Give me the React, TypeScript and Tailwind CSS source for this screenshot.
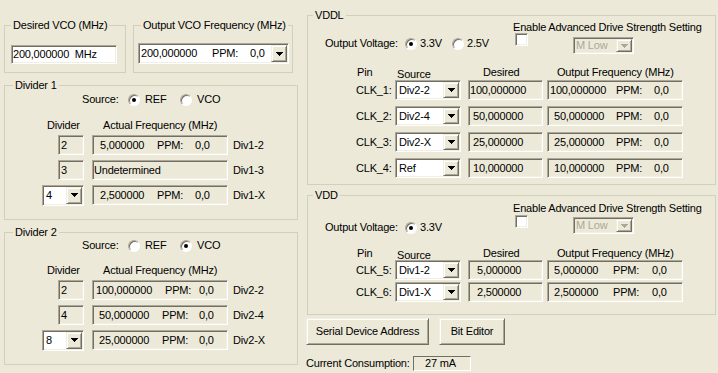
import React from 'react';
import clsx from 'clsx';

// classic win32 3d edges
const sunken =
  'border border-t-[#aca899] border-l-[#aca899] border-b-white border-r-white shadow-[inset_1px_1px_0_#716f64,inset_-1px_-1px_0_#f1efe2]';
const raised =
  'border border-t-[#f1efe2] border-l-[#f1efe2] border-b-[#716f64] border-r-[#716f64] shadow-[inset_1px_1px_0_white,inset_-1px_-1px_0_#aca899]';

const Arrow = ({ color = '#000' }: { color?: string }) => (
  <svg width="7" height="4" viewBox="0 0 7 4">
    <path d="M0 0h7v1h-1v1h-1v1h-1v1h-1v-1h-1v-1h-1v-1h-1z" fill={color} />
  </svg>
);

interface BoxProps {
  className?: string;
  children?: React.ReactNode;
}

const Group: React.FC<BoxProps & { title: string; legend: string }> = ({ title, legend, className, children }) => (
  <fieldset className={clsx('border border-[#d0d0bf] min-w-0', className)}>
    <legend className={clsx('px-[2px] h-[13px] leading-[13px] whitespace-nowrap', legend)}>{title}</legend>
    {children}
  </fieldset>
);

const ReadBox: React.FC<BoxProps> = ({ className, children }) => (
  <div className={clsx('flex items-center whitespace-pre bg-[#ece9d8]', sunken, className)}>{children}</div>
);

const Combo: React.FC<BoxProps & { disabled?: boolean; textCls?: string }> = ({
  className,
  children,
  disabled,
  textCls
}) => (
  <div className={clsx('flex items-stretch', sunken, disabled ? 'bg-[#ece9d8] text-[#aca899]' : 'bg-white', className)}>
    <div className={clsx('flex-1 flex items-center whitespace-pre overflow-hidden', textCls)}>{children}</div>
    <div className={clsx('w-[16px] my-[1px] mr-[1px] flex items-center justify-center bg-[#ece9d8]', raised)}>
      <Arrow color={disabled ? '#aca899' : '#000'} />
    </div>
  </div>
);

const Radio = ({ on }: { on?: boolean }) => (
  <div className="w-[12px] h-[12px] shrink-0 rounded-full bg-white border border-t-[#aca899] border-l-[#aca899] border-b-white border-r-white shadow-[inset_1px_1px_0_#716f64] flex items-center justify-center">
    {on && <div className="w-[4px] h-[4px] rounded-full bg-black" />}
  </div>
);

const Check = ({ className }: { className?: string }) => (
  <div className={clsx('w-[13px] h-[13px] bg-white', sunken, className)} />
);

// value / PPM / 0,0 columns inside a frequency box
const Freq = ({ v, a, b }: { v: string; a: string; b: string }) => (
  <>
    <span className={clsx('shrink-0', a)}>{v}</span>
    <span className={clsx('shrink-0', b)}>PPM:</span>
    <span>0,0</span>
  </>
);

interface DivRow {
  first: React.ReactNode;
  freq: React.ReactNode;
  label: string;
}

const Divider: React.FC<{
  title: string;
  refOn: boolean;
  rows: DivRow[];
  className?: string;
  srcMt: string;
  hdrMt: string;
}> = ({ title, refOn, rows, className, srcMt, hdrMt }) => (
  <Group title={title} legend="ml-[8px]" className={clsx('w-[294px]', className)}>
    <div className={clsx('flex items-center h-[13px]', srcMt)}>
      <span className="ml-[77px] w-[46px]">Source:</span>
      <Radio on={refOn} />
      <span className="ml-[5px] w-[35px]">REF</span>
      <Radio on={!refOn} />
      <span className="ml-[5px]">VCO</span>
    </div>
    <div className={clsx('flex h-[13px]', hdrMt)}>
      <span className="ml-[42px] w-[56px]">Divider</span>
      <span>Actual Frequency (MHz)</span>
    </div>
    {rows.map((r, i) => (
      <div key={r.label} className={clsx('flex items-center h-[20px]', i === 0 ? 'mt-[3px]' : 'mt-[5px]')}>
        <div className="w-[79px] flex justify-end">{r.first}</div>
        <ReadBox className="ml-[8px] w-[136px] h-[20px]">{r.freq}</ReadBox>
        <span className="ml-[5px]">{r.label}</span>
      </div>
    ))}
  </Group>
);

const NumBox = ({ n }: { n: string }) => <ReadBox className="w-[26px] h-[20px] pl-[2px]">{n}</ReadBox>;

const ClkRow: React.FC<{
  label: string;
  src: string;
  desired: string;
  dPl: string;
  v: string;
  a: string;
  b: string;
  className?: string;
}> = ({ label, src, desired, dPl, v, a, b, className }) => (
  <div className={clsx('flex items-center h-[20px]', className)}>
    <span className="ml-[48px] w-[39px]">{label}</span>
    <Combo className="w-[66px] h-[20px]" textCls="pl-[3px]">
      {src}
    </Combo>
    <ReadBox className={clsx('ml-[7px] w-[75px] h-[20px]', dPl)}>{desired}</ReadBox>
    <ReadBox className="ml-[4px] w-[136px] h-[20px]">
      <Freq v={v} a={a} b={b} />
    </ReadBox>
  </div>
);

const DriveSetting: React.FC<{ className?: string; checkCls: string; comboCls: string }> = ({
  className,
  checkCls,
  comboCls
}) => (
  <div className={clsx('flex flex-col', className)}>
    <span className="h-[12px] leading-[12px]">Enable Advanced Drive Strength Setting</span>
    <div className="flex items-start">
      <Check className={clsx('ml-[2px]', checkCls)} />
      <Combo disabled className={clsx('ml-[45px] w-[61px] h-[17px]', comboCls)} textCls="pl-[2px]">
        M Low
      </Combo>
    </div>
  </div>
);

const ColumnHeader = () => (
  <div className="flex items-start h-[13px]">
    <span className="ml-[49px] w-[40px]">Pin</span>
    <span className="w-[86px] mt-[2px]">Source</span>
    <span className="w-[74px]">Desired</span>
    <span>Output Frequency (MHz)</span>
  </div>
);

const Button: React.FC<BoxProps> = ({ className, children }) => (
  <div className={clsx('flex items-center justify-center bg-[#ece9d8]', raised, className)}>{children}</div>
);

export default function App() {
  return (
    <div className="w-[718px] h-[373px] bg-[#ece9d8] flex overflow-hidden whitespace-nowrap text-[11px] leading-[13px] tracking-[-0.2px] text-black font-['Liberation_Sans',Arial,sans-serif]">
      {/* left column */}
      <div className="ml-[4px] w-[294px] shrink-0 flex flex-col pt-[19px]">
        <div className="flex">
          <Group title="Desired VCO (MHz)" legend="ml-[6px]" className="w-[122px] h-[54px]">
            <div className={clsx('mt-[13px] ml-[6px] w-[106px] h-[19px] bg-white flex items-center pl-[1px] whitespace-pre', sunken)}>
              200,000000  MHz
            </div>
          </Group>
          <Group title="Output VCO Frequency (MHz)" legend="ml-[7px]" className="ml-[7px] w-[160px] h-[54px]">
            <Combo className="mt-[11px] ml-[4px] w-[151px] h-[21px]">
              <Freq v="200,000000" a="w-[73px] pl-[2px]" b="w-[38px]" />
            </Combo>
          </Group>
        </div>

        <Divider
          title="Divider 1"
          refOn
          className="mt-[6px] h-[141px]"
          srcMt="mt-[1px]"
          hdrMt="mt-[13px]"
          rows={[
            {
              first: <NumBox n="2" />,
              freq: <Freq v="5,000000" a="w-[64px] pl-[7px]" b="w-[38px]" />,
              label: 'Div1-2'
            },
            { first: <NumBox n="3" />, freq: <span className="pl-[1px]">Undetermined</span>, label: 'Div1-3' },
            {
              first: (
                <Combo className="w-[42px] h-[21px]" textCls="pl-[3px]">
                  4
                </Combo>
              ),
              freq: <Freq v="2,500000" a="w-[64px] pl-[7px]" b="w-[38px]" />,
              label: 'Div1-X'
            }
          ]}
        />

        <Divider
          title="Divider 2"
          refOn={false}
          className="mt-[6px] h-[139px]"
          srcMt="mt-0"
          hdrMt="mt-[12px]"
          rows={[
            {
              first: <NumBox n="2" />,
              freq: <Freq v="100,000000" a="w-[72px] pl-[3px]" b="w-[34px]" />,
              label: 'Div2-2'
            },
            {
              first: <NumBox n="4" />,
              freq: <Freq v="50,000000" a="w-[69px] pl-[6px]" b="w-[37px]" />,
              label: 'Div2-4'
            },
            {
              first: (
                <Combo className="w-[42px] h-[21px]" textCls="pl-[3px]">
                  8
                </Combo>
              ),
              freq: <Freq v="25,000000" a="w-[69px] pl-[6px]" b="w-[37px]" />,
              label: 'Div2-X'
            }
          ]}
        />
      </div>

      {/* right column */}
      <div className="ml-[9px] w-[409px] shrink-0 flex flex-col pt-[9px]">
        <Group title="VDDL" legend="ml-[5px]" className="w-[409px] h-[176px]">
          <div className="flex h-[44px]">
            <div className="w-[205px] pt-[15px]">
              <div className="flex items-center h-[13px] ml-[17px]">
                <span className="w-[80px]">Output Voltage:</span>
                <Radio on />
                <span className="ml-[3px] w-[32px]">3.3V</span>
                <Radio />
                <span className="ml-[3px]">2.5V</span>
              </div>
            </div>
            <DriveSetting className="-mt-[1px]" checkCls="mt-0" comboCls="mt-[4px]" />
          </div>
          <ColumnHeader />
          <ClkRow className="mt-[1px]" label="CLK_1:" src="Div2-2" desired="100,000000" dPl="pl-[1px]" v="100,000000" a="w-[68px] pl-[2px]" b="w-[38px]" />
          <ClkRow className="mt-[6px]" label="CLK_2:" src="Div2-4" desired="50,000000" dPl="pl-[4px]" v="50,000000" a="w-[68px] pl-[6px]" b="w-[38px]" />
          <ClkRow className="mt-[6px]" label="CLK_3:" src="Div2-X" desired="25,000000" dPl="pl-[4px]" v="25,000000" a="w-[68px] pl-[6px]" b="w-[38px]" />
          <ClkRow className="mt-[6px]" label="CLK_4:" src="Ref" desired="10,000000" dPl="pl-[4px]" v="10,000000" a="w-[68px] pl-[6px]" b="w-[38px]" />
        </Group>

        <Group title="VDD" legend="ml-[5px]" className="mt-[4px] w-[409px] h-[126px]">
          <div className="flex h-[45px]">
            <div className="w-[205px] pt-[19px]">
              <div className="flex items-center h-[13px] ml-[17px]">
                <span className="w-[80px]">Output Voltage:</span>
                <Radio on />
                <span className="ml-[3px]">3.3V</span>
              </div>
            </div>
            <DriveSetting checkCls="mt-[1px]" comboCls="mt-[3px]" />
          </div>
          <ColumnHeader />
          <ClkRow label="CLK_5:" src="Div1-2" desired="5,000000" dPl="pl-[8px]" v="5,000000" a="w-[65px] pl-[6px]" b="w-[39px]" />
          <ClkRow className="mt-[2px]" label="CLK_6:" src="Div1-X" desired="2,500000" dPl="pl-[8px]" v="2,500000" a="w-[65px] pl-[6px]" b="w-[39px]" />
        </Group>

        <div className="flex mt-[3px] -ml-[1px]">
          <Button className="w-[123px] h-[27px]">Serial Device Address</Button>
          <Button className="ml-[10px] w-[66px] h-[27px]">Bit Editor</Button>
        </div>

        <div className="flex items-center mt-[11px] -ml-[1px]">
          <span className="w-[107px]">Current Consumption:</span>
          <div className="w-[58px] h-[15px] pl-[11px] flex items-center border border-t-[#716f64] border-l-[#716f64] border-b-white border-r-white">
            27 mA
          </div>
        </div>
      </div>
    </div>
  );
}
